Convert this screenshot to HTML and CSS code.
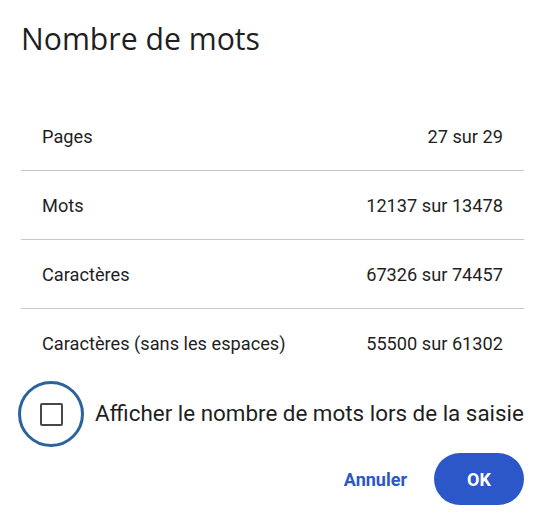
FILE: index.html
```html
<!DOCTYPE html>
<html lang="fr">
<head>
<meta charset="utf-8">
<link rel="stylesheet" href="styles.css">
</head>
<body>
<div class="dialog">
  <h1 class="title">Nombre de mots</h1>
  <div class="stats">
    <div class="row"><span>Pages</span><span>27 sur 29</span></div>
    <div class="row"><span>Mots</span><span>12137 sur 13478</span></div>
    <div class="row"><span>Caractères</span><span>67326 sur 74457</span></div>
    <div class="row"><span>Caractères (sans les espaces)</span><span>55500 sur 61302</span></div>
  </div>
  <label class="option">
    <span class="focus-ring"><span class="box"></span></span>
    <span class="option-label">Afficher le nombre de mots lors de la saisie</span>
  </label>
  <div class="actions">
    <button class="btn-text">Annuler</button>
    <button class="btn-primary">OK</button>
  </div>
</div>
</body>
</html>
```
FILE: styles.css
```css
html, body {
  margin: 0;
  padding: 0;
  background: #ffffff;
}
body {
  font-family: Roboto, "Liberation Sans", Arial, sans-serif;
  color: #202124;
}
.dialog {
  width: 540px;
  height: 525px;
  box-sizing: border-box;
  padding: 19px 16px 0 21px;
}
.title {
  margin: 0;
  font-family: "Open Sans", Roboto, sans-serif;
  font-size: 30.2px;
  font-weight: 400;
  line-height: 40px;
  padding-left: 0;
  color: #1f1f1f;
}
.stats {
  margin-top: 43px;
}
.row {
  height: 69px;
  box-sizing: border-box;
  padding: 0 21px;
  display: flex;
  align-items: center;
  justify-content: space-between;
  border-bottom: 1px solid #c8c8c8;
  font-size: 18.2px;
  color: #1f1f1f;
}
.row:last-child {
  border-bottom: none;
}
.option {
  display: flex;
  align-items: center;
  margin-top: 3px;
  margin-left: -3px;
}
.focus-ring {
  width: 66px;
  height: 66px;
  box-sizing: border-box;
  border: 3px solid #2c639c;
  border-radius: 50%;
  display: flex;
  align-items: center;
  justify-content: center;
}
.box {
  width: 23px;
  height: 23px;
  box-sizing: border-box;
  border: 2.5px solid #474747;
  border-radius: 2px;
}
.option-label {
  margin-left: 11px;
  margin-bottom: 2px;
  font-size: 22.4px;
  color: #1f1f1f;
}
.actions {
  display: flex;
  justify-content: flex-end;
  align-items: center;
  gap: 27px;
  margin-top: 6px;
}
.btn-text, .btn-primary {
  font-family: Roboto, "Liberation Sans", Arial, sans-serif;
  font-size: 18px;
  font-weight: 700;
  border: none;
  cursor: pointer;
}
.btn-text {
  background: none;
  color: #2b57c9;
  padding: 0;
}
.btn-primary {
  width: 90px;
  height: 52px;
  border-radius: 26px;
  background: #2b57c9;
  color: #ffffff;
}
```
